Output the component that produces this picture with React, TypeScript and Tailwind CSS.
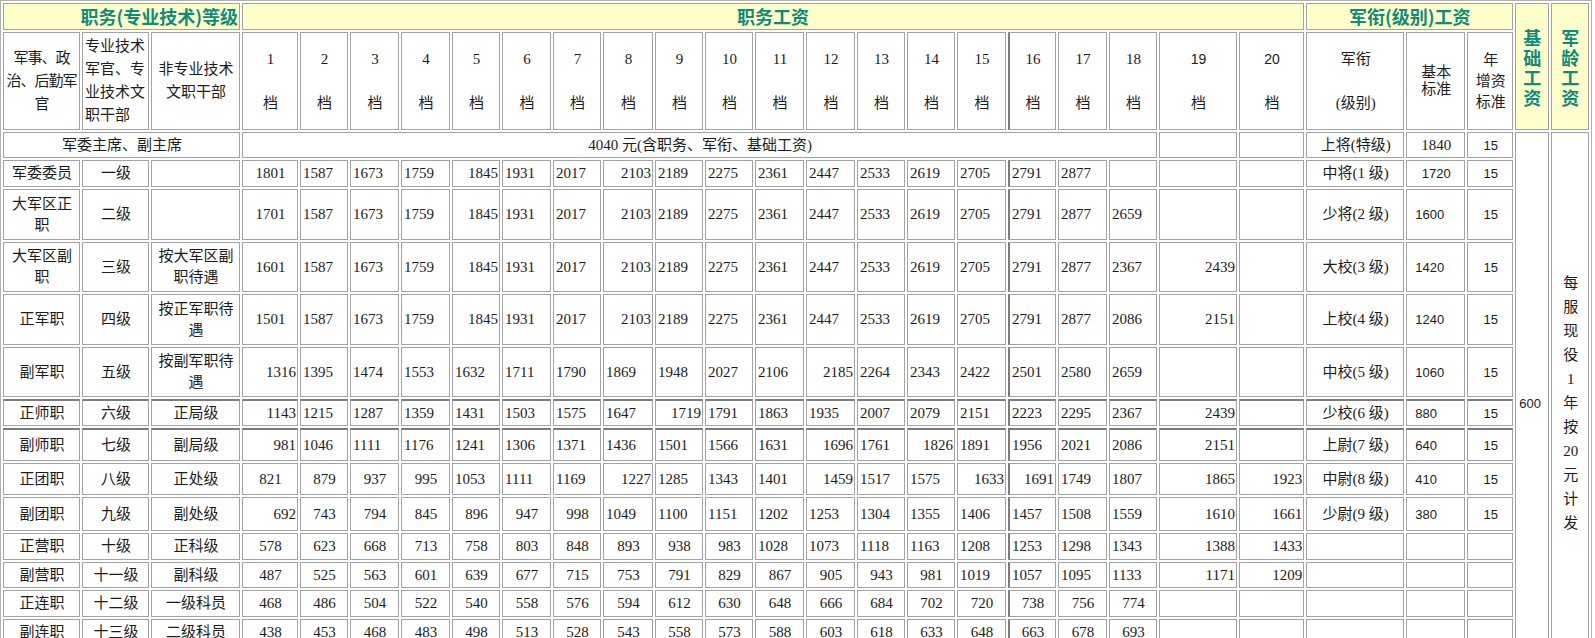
import React from 'react';

const colW = [
  'w-[77px]', 'w-[67px]', 'w-[89px]',
  'w-[56px]', 'w-[48px]', 'w-[49px]', 'w-[49px]', 'w-[48px]', 'w-[49px]', 'w-[48px]', 'w-[50px]', 'w-[48px]', 'w-[48px]',
  'w-[49px]', 'w-[49px]', 'w-[48px]', 'w-[48px]', 'w-[49px]', 'w-[48px]', 'w-[49px]', 'w-[48px]',
  'w-[78px]', 'w-[65px]',
  'w-[98px]', 'w-[59px]', 'w-[46px]', 'w-[34px]', 'w-[38px]',
];

type Row = {
  a: string;
  b: string;
  c: string;
  h: string;
  dark?: boolean;
  v: string[];
  rank: string;
  base: string;
  inc: string;
};

const same = ['1587', '1673', '1759', 'r|1845', '1931', '2017', 'r|2103', '2189', '2275', '2361', '2447', '2533', '2619', '2705', '2791', '2877'];

const rows: Row[] = [
  { a: '军委委员', b: '一级', c: '', h: 'h-[27px]', v: ['c|1801', ...same, '', '', ''], rank: '中将(1 级)', base: 'c|1720', inc: '15' },
  { a: '大军区正\n职', b: '二级', c: '', h: 'h-[51px]', v: ['c|1701', ...same, '2659', '', ''], rank: '少将(2 级)', base: '1600', inc: '15' },
  { a: '大军区副\n职', b: '三级', c: '按大军区副\n职待遇', h: 'h-[50px]', v: ['c|1601', ...same, '2367', 'r|2439', ''], rank: '大校(3 级)', base: '1420', inc: '15' },
  { a: '正军职', b: '四级', c: '按正军职待\n遇', h: 'h-[51px]', v: ['c|1501', ...same, '2086', 'r|2151', ''], rank: '上校(4 级)', base: '1240', inc: '15' },
  {
    a: '副军职', b: '五级', c: '按副军职待\n遇', h: 'h-[50px]',
    v: ['r|1316', '1395', '1474', '1553', '1632', '1711', '1790', '1869', '1948', '2027', '2106', 'r|2185', '2264', '2343', '2422', '2501', '2580', '2659', '', ''],
    rank: '中校(5 级)', base: '1060', inc: '15',
  },
  {
    a: '正师职', b: '六级', c: '正局级', h: 'h-[27px]', dark: true,
    v: ['r|1143', '1215', '1287', '1359', '1431', '1503', '1575', '1647', 'r|1719', '1791', '1863', '1935', '2007', '2079', '2151', '2223', '2295', '2367', 'r|2439', ''],
    rank: '少校(6 级)', base: '880', inc: '15',
  },
  {
    a: '副师职', b: '七级', c: '副局级', h: 'h-[33px]', dark: true,
    v: ['r|981', '1046', '1111', '1176', '1241', '1306', '1371', '1436', '1501', '1566', '1631', 'r|1696', '1761', 'r|1826', '1891', '1956', '2021', '2086', 'r|2151', ''],
    rank: '上尉(7 级)', base: '640', inc: '15',
  },
  {
    a: '正团职', b: '八级', c: '正处级', h: 'h-[32px]',
    v: ['c|821', 'c|879', 'c|937', 'c|995', '1053', '1111', '1169', 'r|1227', '1285', '1343', '1401', 'r|1459', '1517', '1575', 'r|1633', 'r|1691', '1749', '1807', 'r|1865', 'r|1923'],
    rank: '中尉(8 级)', base: '410', inc: '15',
  },
  {
    a: '副团职', b: '九级', c: '副处级', h: 'h-[34px]',
    v: ['r|692', 'c|743', 'c|794', 'c|845', 'c|896', 'c|947', 'c|998', '1049', '1100', '1151', '1202', '1253', '1304', '1355', '1406', '1457', '1508', '1559', 'r|1610', 'r|1661'],
    rank: '少尉(9 级)', base: '380', inc: '15',
  },
  {
    a: '正营职', b: '十级', c: '正科级', h: 'h-[27px]',
    v: ['c|578', 'c|623', 'c|668', 'c|713', 'c|758', 'c|803', 'c|848', 'c|893', 'c|938', 'c|983', '1028', '1073', '1118', '1163', '1208', '1253', '1298', '1343', 'r|1388', 'r|1433'],
    rank: '', base: '', inc: '',
  },
  {
    a: '副营职', b: '十一级', c: '副科级', h: 'h-[26px]',
    v: ['c|487', 'c|525', 'c|563', 'c|601', 'c|639', 'c|677', 'c|715', 'c|753', 'c|791', 'c|829', 'c|867', 'c|905', 'c|943', 'c|981', '1019', '1057', '1095', '1133', 'r|1171', 'r|1209'],
    rank: '', base: '', inc: '',
  },
  {
    a: '正连职', b: '十二级', c: '一级科员', h: 'h-[27px]',
    v: ['c|468', 'c|486', 'c|504', 'c|522', 'c|540', 'c|558', 'c|576', 'c|594', 'c|612', 'c|630', 'c|648', 'c|666', 'c|684', 'c|702', 'c|720', 'c|738', 'c|756', 'c|774', '', ''],
    rank: '', base: '', inc: '',
  },
  {
    a: '副连职', b: '十三级', c: '二级科员', h: 'h-[27px]',
    v: ['c|438', 'c|453', 'c|468', 'c|483', 'c|498', 'c|513', 'c|528', 'c|543', 'c|558', 'c|573', 'c|588', 'c|603', 'c|618', 'c|633', 'c|648', 'c|663', 'c|678', 'c|693', '', ''],
    rank: '', base: '', inc: '',
  },
  {
    a: '正排职', b: '十四级', c: '三级科员', h: 'h-[26px]',
    v: ['c|418', 'c|431', 'c|444', 'c|457', 'c|470', 'c|483', 'c|496', 'c|509', 'c|522', 'c|535', 'c|548', 'c|561', 'c|574', 'c|587', 'c|600', 'c|613', 'c|626', 'c|639', '', ''],
    rank: '', base: '', inc: '',
  },
];

const cell = 'border border-[#a3a3a3] pl-[2px] pr-[1px] py-0 align-middle';
const head = "border border-[#a3a3a3] bg-[#ffffcc] text-[#108a7a] font-bold text-[18px] font-['Noto_Sans_CJK_SC',sans-serif] px-[1px] py-0";
const sans = "font-['Liberation_Sans','Noto_Sans_CJK_SC',sans-serif] text-[13px]";
const darkTop = ' border-t-2 border-t-[#7c7c7c]';
const darkLeft = ' border-l-2 border-l-[#7c7c7c]';

function split(v: string): [string, string] {
  if (v.startsWith('r|')) return ['text-right', v.slice(2)];
  if (v.startsWith('c|')) return ['text-center', v.slice(2)];
  return ['text-left', v];
}

const App = () => {
  return (
    <div className="w-[1595px] h-[638px] overflow-hidden bg-white">
      <table className="table-fixed w-[1592px] border-separate border-spacing-[2px] border border-[#b0b0b0] text-[#1c1c1c] text-[15px] leading-[21px] font-['Liberation_Serif','Noto_Sans_CJK_SC',serif]">
        <colgroup>
          {colW.map((w, i) => (
            <col key={i} className={w} />
          ))}
        </colgroup>
        <tbody>
          {/* top header */}
          <tr className="h-[27px]">
            <td colSpan={3} className={head + ' text-right'}>职务(专业技术)等级</td>
            <td colSpan={20} className={head + ' text-center'}>职务工资</td>
            <td colSpan={3} className={head + ' text-center'}>军衔(级别)工资</td>
            <td rowSpan={2} className={head + ' text-center whitespace-pre-line leading-[20px]'}>{'基\n础\n工\n资'}</td>
            <td rowSpan={2} className={head + ' text-center whitespace-pre-line leading-[20px]'}>{'军\n龄\n工\n资'}</td>
          </tr>
          <tr className="h-[98px]">
            <td className="border border-[#a3a3a3] p-0 align-middle text-center whitespace-pre leading-[23px] tracking-[-1px]">
              {'军事、政\n治、后勤军\n官'}
            </td>
            <td className={cell + ' text-left whitespace-pre-line leading-[23px]'}>{'专业技术\n军官、专\n业技术文\n职干部'}</td>
            <td className={cell + ' text-center whitespace-pre-line leading-[23px]'}>{'非专业技术\n文职干部'}</td>
            {Array.from({ length: 20 }, (_, i) => (
              <td
                key={i}
                className={cell + ' text-center leading-[22px]' + (i === 15 ? darkLeft : '')}
              >
                <div className={i >= 18 ? "font-['Liberation_Sans',sans-serif] text-[14px]" : ''}>{i + 1}</div>
                <div>&nbsp;</div>
                <div>档</div>
              </td>
            ))}
            <td className={cell + ' text-center whitespace-pre-line leading-[22px]'}>{'军衔\n\n(级别)'}</td>
            <td className={cell + ' text-center whitespace-pre-line leading-[17px]'}>{'基本\n标准'}</td>
            <td className={cell + ' text-center whitespace-pre-line leading-[21px]'}>{'年\n增资\n标准'}</td>
          </tr>

          {/* chairman row */}
          <tr className="h-[26px]">
            <td colSpan={3} className={cell + ' text-center'}>军委主席、副主席</td>
            <td colSpan={18} className={cell + ' text-center'}>4040 元(含职务、军衔、基础工资)</td>
            <td className={cell}></td>
            <td className={cell}></td>
            <td className={cell + ' text-center'}>上将(特级)</td>
            <td className={cell + ' text-center'}>1840</td>
            <td className={cell + ' text-center ' + sans}>15</td>
            <td rowSpan={rows.length + 1} className={cell + ' text-left pl-[3px] ' + sans}>600</td>
            <td rowSpan={rows.length + 1} className={cell + ' text-center whitespace-pre-line leading-[24px]'}>
              {'每\n服\n现\n役\n1\n年\n按\n20\n元\n计\n发'}
            </td>
          </tr>

          {rows.map((r, i) => {
            const d = r.dark ? darkTop : '';
            const [baseAl, baseTxt] = split(r.base);
            return (
              <tr key={i} className={r.h}>
                <td className={cell + ' text-center whitespace-pre-line' + d}>{r.a}</td>
                <td className={cell + ' text-center' + d}>{r.b}</td>
                <td className={cell + ' text-center whitespace-pre-line' + d}>{r.c}</td>
                {r.v.map((v, j) => {
                  const [al, txt] = split(v);
                  return (
                    <td key={j} className={cell + ' ' + al + d + (j === 15 ? darkLeft : '')}>
                      {txt}
                    </td>
                  );
                })}
                <td className={cell + ' text-center' + d}>{r.rank}</td>
                <td className={cell + ' ' + sans + ' ' + (baseAl === 'text-center' ? 'text-center' : 'text-left pl-[8px]') + d}>
                  {baseTxt}
                </td>
                <td className={cell + ' text-center ' + sans + d}>{r.inc}</td>
              </tr>
            );
          })}
        </tbody>
      </table>
    </div>
  );
};

export default App;
